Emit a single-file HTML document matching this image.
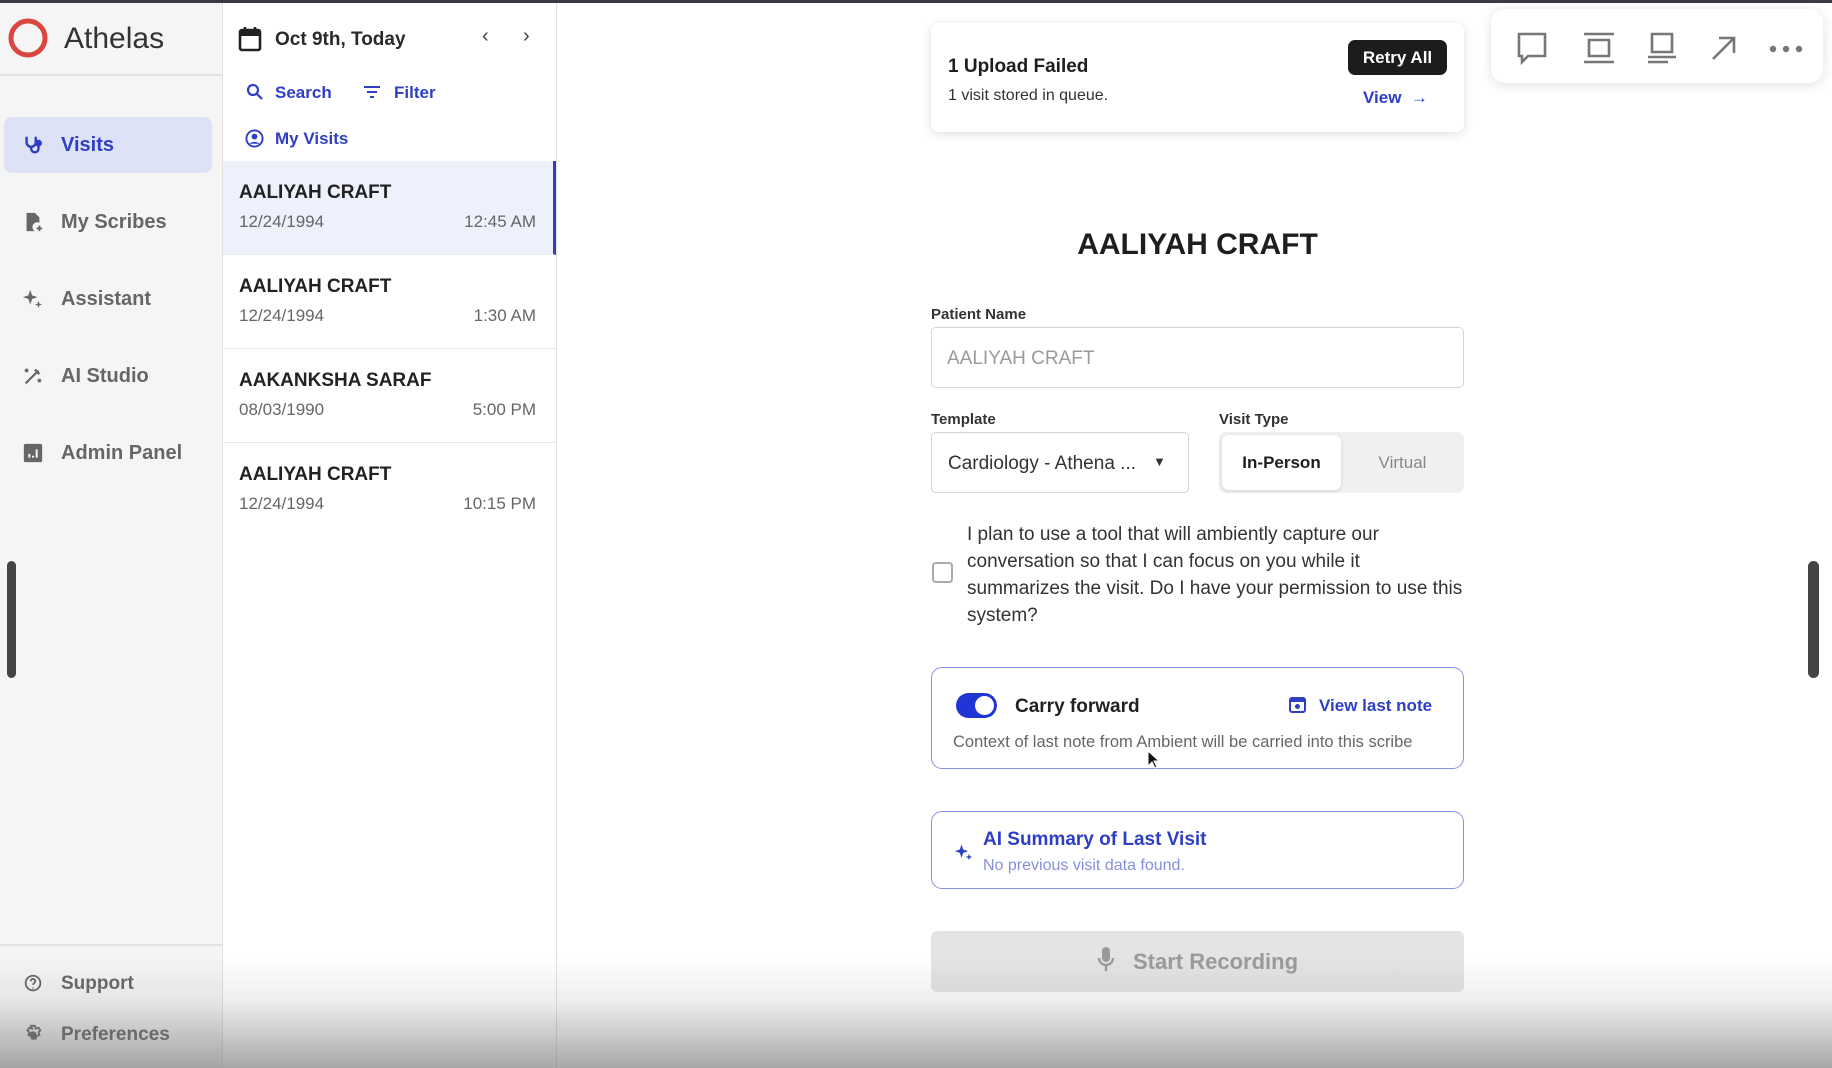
<!DOCTYPE html>
<html><head><meta charset="utf-8"><style>
*{box-sizing:border-box;margin:0;padding:0}
body{width:1832px;height:1068px;overflow:hidden;background:#fff;font-family:"Liberation Sans",sans-serif;position:relative;color:#1e1e1e}
.a{position:absolute}
.side{left:0;top:0;width:223px;height:1068px;background:#f5f5f5;border-right:1px solid #e2e2e2}
.list{left:223px;top:0;width:334px;height:1068px;background:#fff;border-right:1px solid #e0e0e0}
.nav{left:4px;width:208px;height:56px;display:flex;align-items:center;padding-left:18px;font-size:20px;font-weight:bold;color:#666}
.nav svg{margin-right:17px}
.item{left:0;width:333px;height:94px;border-bottom:1px solid #e6e6e6}
.item .n{position:absolute;left:16px;top:21px;font-size:19px;font-weight:bold;color:#222}
.item .d{position:absolute;left:16px;top:51px;font-size:17px;color:#666}
.item .t{position:absolute;right:20px;top:51px;font-size:17px;color:#666}
.lbl{font-size:15px;font-weight:bold;color:#333}
.card{border:1.5px solid #8a8fe6;border-radius:11px;background:#fff}
</style></head><body>
<div class="a" style="left:0;top:0;width:1832px;height:3px;background:#3d3846;z-index:5"></div>

<div class="a side">
  <div class="a" style="left:0;top:74px;width:223px;height:2px;background:#e4e4e4"></div>
  <svg class="a" style="left:7px;top:17px" width="42" height="42"><circle cx="21" cy="21" r="17" fill="none" stroke="#d9473f" stroke-width="5"/></svg>
  <div class="a" style="left:64px;top:22px;font-size:30px;color:#333">Athelas</div>
  <div class="a nav" style="top:117px;background:#dde2f7;border-radius:8px;color:#2f3fc4">
    <svg width="22" height="22" viewBox="0 0 24 24" fill="none" stroke="#2f3fc4" stroke-width="2.6"><path d="M5 3v6a5 5 0 0010 0V3M10 14v2a4 4 0 008 0v-3"/><circle cx="18" cy="10" r="2.5" fill="#2f3fc4"/></svg>Visits</div>
  <div class="a nav" style="top:194px"><svg width="22" height="22" viewBox="0 0 24 24"><path d="M5 2h9l5 5v6a5 5 0 00-5 9H5z" fill="#666"/><path d="M19 16v6M16 19h6" stroke="#666" stroke-width="2"/></svg>My Scribes</div>
  <div class="a nav" style="top:271px"><svg width="22" height="22" viewBox="0 0 24 24" fill="#666"><path d="M9 2l2 6 6 2-6 2-2 6-2-6-6-2 6-2z"/><path d="M18 14l1 3 3 1-3 1-1 3-1-3-3-1 3-1z"/></svg>Assistant</div>
  <div class="a nav" style="top:348px"><svg width="22" height="22" viewBox="0 0 24 24" fill="none" stroke="#666" stroke-width="2.4"><path d="M4 20L18 6M14 5l5 5M3 6h4M5 4v4M17 17h4M19 15v4"/></svg>AI Studio</div>
  <div class="a nav" style="top:425px"><svg width="22" height="22" viewBox="0 0 24 24"><rect x="2" y="2" width="20" height="20" rx="2" fill="#666"/><path d="M8 17v-4M12 17v-2M16 17V8" stroke="#f5f5f5" stroke-width="2.2"/></svg>Admin Panel</div>
  <div class="a" style="left:7px;top:561px;width:9px;height:117px;border-radius:5px;background:#444"></div>
  <div class="a" style="left:0;top:944px;width:223px;height:2px;background:#e4e4e4"></div>
  <div class="a nav" style="top:956px;font-size:19px"><svg width="22" height="22" viewBox="0 0 24 24" fill="none" stroke="#666" stroke-width="2"><circle cx="12" cy="11" r="8"/><path d="M9.5 9a2.5 2.5 0 115 0c0 2-2.5 2-2.5 4M12 16v1"/></svg>Support</div>
  <div class="a nav" style="top:1007px;font-size:19px"><svg width="22" height="22" viewBox="0 0 24 24" fill="none" stroke="#666" stroke-width="2"><circle cx="12" cy="12" r="3" fill="#666"/><path d="M10 2h4l1 3 3-1 2 3-2 2 1 3-3 1-1 3h-4l-1-3-3-1 1-3-2-2 2-3 3 1z"/></svg>Preferences</div>
</div>

<div class="a list">
  <svg class="a" style="left:15px;top:26px" width="24" height="26" viewBox="0 0 24 26"><rect x="2" y="4" width="20" height="20" rx="2" fill="none" stroke="#222" stroke-width="2.6"/><rect x="2" y="4" width="20" height="6" fill="#222"/><path d="M7 1v5M17 1v5" stroke="#222" stroke-width="2.6"/></svg>
  <div class="a" style="left:52px;top:29px;font-size:19px;font-weight:bold;color:#2a2a2a">Oct 9th, Today</div>
  <div class="a" style="left:259px;top:25px;font-size:20px;color:#444">‹</div>
  <div class="a" style="left:300px;top:25px;font-size:20px;color:#444">›</div>
  <svg class="a" style="left:23px;top:83px" width="17" height="17" viewBox="0 0 17 17" fill="none" stroke="#2f3fc4" stroke-width="2.2"><circle cx="7" cy="7" r="5"/><path d="M11 11l5 5"/></svg>
  <div class="a" style="left:52px;top:83px;font-size:17px;font-weight:bold;color:#2f3fc4">Search</div>
  <svg class="a" style="left:140px;top:85px" width="18" height="14" fill="none" stroke="#2f3fc4" stroke-width="2"><path d="M1 2h16M4 7h10M7 12h4"/></svg>
  <div class="a" style="left:171px;top:83px;font-size:17px;font-weight:bold;color:#2f3fc4">Filter</div>
  <svg class="a" style="left:22px;top:129px" width="19" height="19" viewBox="0 0 20 20"><circle cx="10" cy="10" r="8.5" fill="none" stroke="#2f3fc4" stroke-width="2"/><circle cx="10" cy="8" r="3" fill="#2f3fc4"/><path d="M4.5 15.5a7 5 0 0111 0" fill="#2f3fc4"/></svg>
  <div class="a" style="left:52px;top:129px;font-size:17px;font-weight:bold;color:#2f3fc4">My Visits</div>

  <div class="a item" style="top:161px;background:#eef0fb;border-right:3px solid #3340b8"><div class="n">AALIYAH CRAFT</div><div class="d">12/24/1994</div><div class="t" style="right:17px">12:45 AM</div></div>
  <div class="a item" style="top:255px"><div class="n">AALIYAH CRAFT</div><div class="d">12/24/1994</div><div class="t">1:30 AM</div></div>
  <div class="a item" style="top:349px"><div class="n">AAKANKSHA SARAF</div><div class="d">08/03/1990</div><div class="t">5:00 PM</div></div>
  <div class="a item" style="top:443px;border:none"><div class="n">AALIYAH CRAFT</div><div class="d">12/24/1994</div><div class="t">10:15 PM</div></div>
</div>

<!-- upload card -->
<div class="a" style="left:931px;top:23px;width:533px;height:109px;border-radius:8px;background:#fff;box-shadow:0 2px 10px rgba(0,0,0,.13)">
  <div class="a" style="left:17px;top:33px;font-size:19px;font-weight:bold;color:#1e1e1e">1 Upload Failed</div>
  <div class="a" style="left:17px;top:64px;font-size:16px;color:#333">1 visit stored in queue.</div>
  <div class="a" style="left:417px;top:17px;width:99px;height:35px;background:#1c1c1c;border-radius:7px;color:#fff;font-size:17px;font-weight:bold;text-align:center;line-height:35px">Retry All</div>
  <div class="a" style="left:432px;top:65px;font-size:17px;font-weight:bold;color:#2f3fc4">View&nbsp;&nbsp;→</div>
</div>

<!-- toolbar -->
<div class="a" style="left:1491px;top:9px;width:332px;height:74px;border-radius:14px;background:#fff;box-shadow:0 2px 12px rgba(0,0,0,.12)">
  <svg class="a" style="left:24px;top:22px" width="34" height="34" fill="none" stroke="#777" stroke-width="2.6"><path d="M4 3h26v22H13l-6 6v-6H4z"/></svg>
  <svg class="a" style="left:91px;top:22px" width="34" height="34" fill="none" stroke="#777" stroke-width="2.6"><path d="M2 3h30M2 31h30M7 9h20v16H7z"/></svg>
  <svg class="a" style="left:154px;top:22px" width="34" height="34" fill="none" stroke="#777" stroke-width="2.6"><path d="M7 3h20v18H7zM3 26h28M3 31h20"/></svg>
  <svg class="a" style="left:218px;top:24px" width="30" height="30" fill="none" stroke="#777" stroke-width="2.6"><path d="M4 26L25 5M10 5h15v15"/></svg>
  <svg class="a" style="left:278px;top:36px" width="34" height="8" fill="#777"><circle cx="4" cy="4" r="3.2"/><circle cx="17" cy="4" r="3.2"/><circle cx="30" cy="4" r="3.2"/></svg>
</div>

<div class="a" style="left:931px;top:228px;width:533px;text-align:center;font-size:30px;font-weight:bold;color:#1e1e1e">AALIYAH CRAFT</div>

<div class="a lbl" style="left:931px;top:306px">Patient Name</div>
<div class="a" style="left:931px;top:327px;width:533px;height:61px;border:1.5px solid #d4d4d4;border-radius:5px;font-size:19px;color:#9a9a9a;padding:20px 0 0 15px">AALIYAH CRAFT</div>

<div class="a lbl" style="left:931px;top:411px">Template</div>
<div class="a" style="left:931px;top:432px;width:258px;height:61px;border:1.5px solid #d4d4d4;border-radius:5px;font-size:19px;color:#333;padding:20px 0 0 16px">Cardiology - Athena ...<span style="position:absolute;left:221px;top:21px;font-size:13px">▼</span></div>

<div class="a lbl" style="left:1219px;top:411px">Visit Type</div>
<div class="a" style="left:1219px;top:432px;width:245px;height:61px;background:#f0f0f0;border-radius:7px">
  <div class="a" style="left:3px;top:3px;width:119px;height:55px;background:#fff;border-radius:7px;box-shadow:0 1px 4px rgba(0,0,0,.12);text-align:center;line-height:55px;font-size:17px;font-weight:bold;color:#1e1e1e">In-Person</div>
  <div class="a" style="left:122px;top:3px;width:123px;height:55px;text-align:center;line-height:55px;font-size:17px;color:#888">Virtual</div>
</div>

<div class="a" style="left:932px;top:562px;width:21px;height:21px;border:2px solid #aaa;border-radius:4px"></div>
<div class="a" style="left:967px;top:521px;font-size:19px;line-height:27px;color:#333">I plan to use a tool that will ambiently capture our<br>conversation so that I can focus on you while it<br>summarizes the visit. Do I have your permission to use this<br>system?</div>

<div class="a card" style="left:931px;top:667px;width:533px;height:102px">
  <div class="a" style="left:24px;top:25px;width:41px;height:25px;border-radius:13px;background:#1f35d6"><div class="a" style="left:19px;top:3px;width:19px;height:19px;border-radius:50%;background:#fff"></div></div>
  <div class="a" style="left:83px;top:28px;font-size:19px;font-weight:bold;color:#222">Carry forward</div>
  <svg class="a" style="left:357px;top:29px" width="17" height="16"><rect x="1" y="1" width="15" height="14" rx="2" fill="none" stroke="#2f3fc4" stroke-width="2"/><rect x="1" y="1" width="15" height="4" fill="#2f3fc4"/><circle cx="8.5" cy="9.5" r="2.5" fill="#2f3fc4"/></svg>
  <div class="a" style="left:387px;top:28px;font-size:17px;font-weight:bold;color:#2f3fc4">View last note</div>
  <div class="a" style="left:21px;top:65px;font-size:16.5px;color:#666">Context of last note from Ambient will be carried into this scribe</div>
</div>
<svg class="a" style="left:1147px;top:750px" width="14" height="20"><path d="M1 1v15l4-4 3 6 2-1-3-6h5z" fill="#111" stroke="#fff" stroke-width="1"/></svg>

<div class="a card" style="left:931px;top:811px;width:533px;height:78px">
  <svg class="a" style="left:22px;top:30px" width="20" height="20" viewBox="0 0 24 24" fill="#2f3fc4"><path d="M9 3l2 6 6 2-6 2-2 6-2-6-6-2 6-2z"/><path d="M18 14l1 3 3 1-3 1-1 3-1-3-3-1 3-1z"/></svg>
  <div class="a" style="left:51px;top:17px;font-size:19px;font-weight:bold;color:#2f3fc4">AI Summary of Last Visit</div>
  <div class="a" style="left:51px;top:45px;font-size:16px;color:#8690dd">No previous visit data found.</div>
</div>

<div class="a" style="left:931px;top:931px;width:533px;height:61px;background:#e4e4e4;border-radius:6px;text-align:center;line-height:61px;font-size:22px;font-weight:bold;color:#9a9a9a">
  <svg style="vertical-align:-3px;margin-right:18px" width="18" height="26" viewBox="0 0 18 26"><rect x="5" y="1" width="8" height="15" rx="4" fill="#9a9a9a"/><path d="M2 12a7 7 0 0014 0M9 19v6" fill="none" stroke="#9a9a9a" stroke-width="2.4"/></svg>Start Recording</div>

<div class="a" style="left:1808px;top:561px;width:11px;height:117px;border-radius:6px;background:#444"></div>

<div class="a" style="left:0;top:955px;width:1832px;height:113px;background:linear-gradient(rgba(120,120,120,0),rgba(120,120,120,.12) 40%,rgba(110,110,110,.6));pointer-events:none"></div>
</body></html>
